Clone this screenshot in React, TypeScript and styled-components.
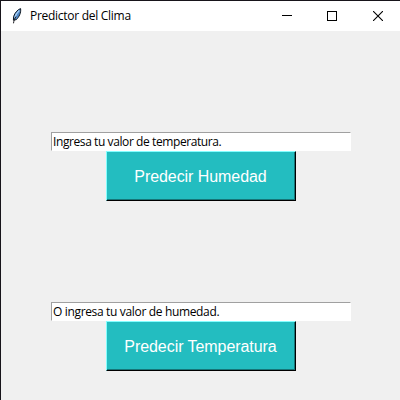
import React from "react";
import styled, { createGlobalStyle } from "styled-components";

const GlobalStyle = createGlobalStyle`
  * { box-sizing: border-box; }
  body { margin: 0; background: #f0f0f0; }
`;

const Window = styled.div`
  width: 400px;
  height: 400px;
  display: flex;
  flex-direction: column;
  background: #f0f0f0;
  border-top: 1px solid #17141a;
  border-left: 1px solid #17141a;
  overflow: hidden;
`;

const TitleBar = styled.header`
  flex: none;
  height: 30px;
  display: flex;
  align-items: center;
  background: #fff;
  padding-left: 10px;
`;

const Title = styled.h1`
  margin: 0 auto 0 7px;
  font: 400 12px/16px "Open Sans", "Noto Sans", sans-serif;
  letter-spacing: -0.28px;
  color: #000;
  white-space: nowrap;
`;

const Control = styled.button<{ $width: number }>`
  width: ${(p) => p.$width}px;
  height: 30px;
  flex: none;
  padding: 0;
  border: 0;
  background: transparent;
  display: flex;
  align-items: center;
  justify-content: center;
`;

const Content = styled.main`
  display: flex;
  flex-direction: column;
  align-items: center;
  gap: 101px;
  padding-top: 101px;
`;

const Group = styled.section`
  display: flex;
  flex-direction: column;
  align-items: center;
  width: 300px;
`;

const Entry = styled.input<{ $spacing: number }>`
  width: 300px;
  height: 19px;
  padding: 0 1px 0 1.5px;
  border: 1px solid #fff;
  border-top-color: #a0a0a0;
  border-left-color: #a0a0a0;
  border-radius: 0;
  outline: none;
  background: #fff;
  color: #000;
  font: 400 12px/17px "Open Sans", "Noto Sans", sans-serif;
  letter-spacing: ${(p) => p.$spacing}px;
`;

const PredictButton = styled.button`
  width: 190px;
  height: 50px;
  padding: 1px 0 0;
  border: 1px solid #000;
  border-top-color: #84ffff;
  border-left-color: #84ffff;
  border-radius: 0;
  box-shadow: inset -1px -1px #157678;
  background: #23bdc0;
  color: #fff;
  font: 400 16px/20px "Liberation Sans", Arial, sans-serif;
  letter-spacing: -0.06px;
  white-space: nowrap;
`;

const FeatherIcon = () => (
  <svg width="12" height="16" viewBox="0 0 12 16">
    <path d="M9.6.6C7 1.300 4 4.500 2.600 8.500L2.400 12.200 5.400 11.600C8 9 10.200 5 9.600.6Z" fill="#4f88c8" stroke="#101820" strokeWidth="1" />
    <path d="M8.300 2.500C6 4.500 4.500 7 3.800 10" fill="none" stroke="#a9d0f5" strokeWidth="1.200" />
    <path d="M5 8.500C3.800 10.500 2.800 12.500 2.500 15.300" fill="none" stroke="#1d1d22" strokeWidth="1" />
  </svg>
);

const MinimizeIcon = () => (
  <svg width="10" height="10" viewBox="0 0 10 10" shapeRendering="crispEdges">
    <path d="M0 4.500H10" stroke="#000" />
  </svg>
);

const MaximizeIcon = () => (
  <svg width="10" height="10" viewBox="0 0 10 10" shapeRendering="crispEdges">
    <rect x=".5" y=".5" width="9" height="9" fill="none" stroke="#000" />
  </svg>
);

const CloseIcon = () => (
  <svg width="10" height="10" viewBox="0 0 10 10">
    <path d="M0 0L10 10M10 0L0 10" stroke="#000" strokeWidth="1.100" />
  </svg>
);

const forms = [
  { text: "Ingresa tu valor de temperatura.", action: "Predecir Humedad", spacing: -0.41 },
  { text: "O ingresa tu valor de humedad.", action: "Predecir Temperatura", spacing: -0.34 },
];

export default function App() {
  return (
    <>
      <GlobalStyle />
      <Window>
        <TitleBar>
          <FeatherIcon />
          <Title>Predictor del Clima</Title>
          <Control aria-label="Minimizar" $width={42}><MinimizeIcon /></Control>
          <Control aria-label="Maximizar" $width={48}><MaximizeIcon /></Control>
          <Control aria-label="Cerrar" $width={44}><CloseIcon /></Control>
        </TitleBar>
        <Content>
          {forms.map((f) => (
            <Group key={f.action}>
              <Entry defaultValue={f.text} $spacing={f.spacing} spellCheck={false} />
              <PredictButton>{f.action}</PredictButton>
            </Group>
          ))}
        </Content>
      </Window>
    </>
  );
}
